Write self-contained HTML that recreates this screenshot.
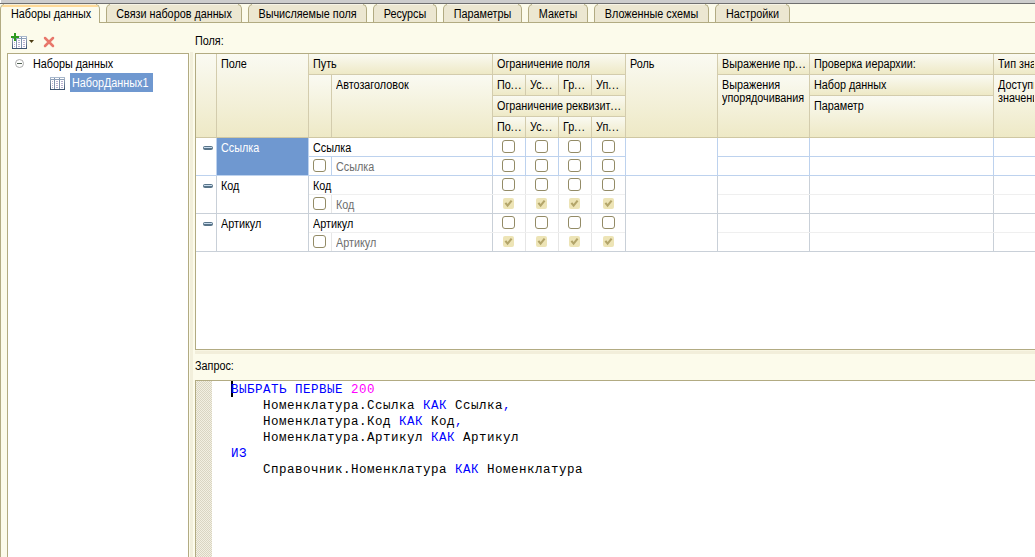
<!DOCTYPE html>
<html><head><meta charset="utf-8">
<style>
*{margin:0;padding:0;box-sizing:border-box}
html,body{width:1035px;height:557px;overflow:hidden;background:#FCFBEB;font-family:"Liberation Sans",sans-serif;font-size:11px;color:#000}
.a{position:absolute}
.t{position:absolute;white-space:pre;line-height:13px;font-size:12px;transform:scaleX(0.9);transform-origin:0 0}
.tab{position:absolute;top:4px;height:18px;background:#ECE7D1;border:1px solid #B2AB82;border-bottom:none;border-radius:5px 5px 0 0}
.tab span{position:absolute;top:3px;left:0;right:0;text-align:center;white-space:pre;line-height:13px;font-size:12px;transform:scaleX(0.9);transform-origin:50% 0}
.hd{position:absolute;background:linear-gradient(#FAFAF2,#EEE9C6)}
.cb{position:absolute;width:13px;height:13px;border:1px solid #938B66;border-radius:3px;background:#fff}
.cbd{position:absolute;width:11px;height:11px;border-radius:2px;background:#EDE4B6}
.mi{position:absolute;width:10px;height:4px;border-radius:2px;background:#587489}
.mi:after{content:"";position:absolute;left:1px;top:1px;width:8px;height:1px;background:#C9DCEE}
.code{position:absolute;font-family:"Liberation Mono",monospace;font-size:12.5px;letter-spacing:0.5px;line-height:16px;white-space:pre}
.kw{color:#0000FF}
.num{color:#FF00FF}
</style></head><body>

<div class="a" style="left:0px;top:0px;width:1035px;height:3px;background:#CDCDCD"></div>
<div class="a" style="left:0px;top:3px;width:1035px;height:1px;background:#6F6F6F"></div>
<div class="a" style="left:0px;top:0px;width:1px;height:3px;background:#FFFFFF"></div>
<div class="a" style="left:99px;top:22px;width:936px;height:1px;background:#B2AB82"></div>
<div class="a" style="left:0px;top:22px;width:1px;height:535px;background:#B2AB82"></div>
<div class="tab" style="left:0;width:100px;height:19px;background:#FCFBEB"><span style="left:2px;right:0">Наборы данных</span></div>
<div class="a" style="left:4px;top:4px;width:92px;height:1px;background:#F4EFDC"></div>
<div class="a" style="left:2px;top:5px;width:96px;height:2px;background:#FFDA98;border-radius:3px 3px 0 0"></div>
<div class="tab" style="left:106px;width:136px"><span>Связи наборов данных</span></div>
<div class="a" style="left:110px;top:4px;width:128px;height:1px;background:#F7F4E6"></div>
<div class="tab" style="left:248px;width:119px"><span>Вычисляемые поля</span></div>
<div class="a" style="left:252px;top:4px;width:111px;height:1px;background:#F7F4E6"></div>
<div class="tab" style="left:373px;width:64px"><span>Ресурсы</span></div>
<div class="a" style="left:377px;top:4px;width:56px;height:1px;background:#F7F4E6"></div>
<div class="tab" style="left:443px;width:79px"><span>Параметры</span></div>
<div class="a" style="left:447px;top:4px;width:71px;height:1px;background:#F7F4E6"></div>
<div class="tab" style="left:528px;width:60px"><span>Макеты</span></div>
<div class="a" style="left:532px;top:4px;width:52px;height:1px;background:#F7F4E6"></div>
<div class="tab" style="left:594px;width:115px"><span>Вложенные схемы</span></div>
<div class="a" style="left:598px;top:4px;width:107px;height:1px;background:#F7F4E6"></div>
<div class="tab" style="left:715px;width:75px"><span>Настройки</span></div>
<div class="a" style="left:719px;top:4px;width:67px;height:1px;background:#F7F4E6"></div>
<svg class="a" style="left:10px;top:32px" width="26" height="18" viewBox="0 0 26 18"><defs><linearGradient id="tg" x1="0" y1="0" x2="0" y2="1"><stop offset="0" stop-color="#A9B8CC"/><stop offset="1" stop-color="#3E5370"/></linearGradient></defs>
<rect x="2.5" y="4.5" width="14" height="12" fill="#fff" stroke="url(#tg)"/>
<line x1="6.5" y1="5" x2="6.5" y2="16" stroke="#7F93AE"/>
<line x1="11.5" y1="5" x2="11.5" y2="16" stroke="#7F93AE"/>
<line x1="3" y1="6.5" x2="16" y2="6.5" stroke="#8EA0B8"/>
<g fill="#B9B0D0"><rect x="4" y="8" width="1" height="1"/><rect x="8" y="8" width="2" height="1"/><rect x="13" y="8" width="2" height="1"/><rect x="4" y="10" width="1" height="1"/><rect x="8" y="10" width="2" height="1"/><rect x="13" y="10" width="2" height="1"/><rect x="4" y="12" width="1" height="1"/><rect x="8" y="12" width="2" height="1"/><rect x="13" y="12" width="2" height="1"/><rect x="4" y="14" width="1" height="1"/><rect x="8" y="14" width="2" height="1"/><rect x="13" y="14" width="2" height="1"/></g><rect x="1" y="4" width="8" height="2" fill="#2E9A1E"/><rect x="4" y="1" width="2" height="8" fill="#2E9A1E"/><path d="M19 8 L24 8 L21.5 11 Z" fill="#4B3C12"/></svg>
<svg class="a" style="left:42px;top:35px" width="14" height="14" viewBox="0 0 14 14"><path d="M3 3 L11 11 M11 3 L3 11" stroke="#E8776B" stroke-width="2.5" stroke-linecap="round"/></svg>
<div class="a" style="left:7px;top:53px;width:182px;height:504px;background:#fff;border:1px solid #B2AB82;border-bottom:none"></div>
<svg class="a" style="left:15px;top:59px" width="9" height="9" viewBox="0 0 9 9"><circle cx="4.5" cy="4.5" r="4" fill="#fff" stroke="#ABABAB"/><rect x="2" y="4" width="5" height="1" fill="#4F5F50"/></svg>
<div class="t" style="left:33px;top:58px;">Наборы данных</div>
<svg class="a" style="left:50px;top:77px" width="15" height="13" viewBox="0 0 15 13"><defs><linearGradient id="tg2" x1="0" y1="0" x2="0" y2="1"><stop offset="0" stop-color="#A9B8CC"/><stop offset="1" stop-color="#3E5370"/></linearGradient></defs>
<rect x="0.5" y="0.5" width="14" height="12" fill="#fff" stroke="url(#tg2)"/>
<line x1="4.5" y1="1" x2="4.5" y2="12" stroke="#7F93AE"/>
<line x1="9.5" y1="1" x2="9.5" y2="12" stroke="#7F93AE"/>
<line x1="1" y1="2.5" x2="14" y2="2.5" stroke="#8EA0B8"/>
<g fill="#B9B0D0"><rect x="2" y="4" width="1" height="1"/><rect x="6" y="4" width="2" height="1"/><rect x="11" y="4" width="2" height="1"/><rect x="2" y="6" width="1" height="1"/><rect x="6" y="6" width="2" height="1"/><rect x="11" y="6" width="2" height="1"/><rect x="2" y="8" width="1" height="1"/><rect x="6" y="8" width="2" height="1"/><rect x="11" y="8" width="2" height="1"/><rect x="2" y="10" width="1" height="1"/><rect x="6" y="10" width="2" height="1"/><rect x="11" y="10" width="2" height="1"/></g></svg>
<div class="a" style="left:70px;top:73px;width:83px;height:19px;background:#6F98D0"></div>
<div class="t" style="left:72px;top:77px;color:#fff">НаборДанных1</div>
<div class="a" style="left:190px;top:52px;width:3px;height:505px;background:#F2EFDB"></div>
<div class="t" style="left:195px;top:35px;">Поля:</div>
<div class="a" style="left:195px;top:53px;width:840px;height:297px;background:#fff;border:1px solid #B2AB82;border-right:none"></div>
<div class="a" style="left:196px;top:54px;width:839px;height:84px;background:#D3CCAD"></div>
<div class="a" style="left:196px;top:54px;width:20px;height:83px;background:linear-gradient(#FAFAF2,#EEE9C6)"></div>
<div class="a" style="left:217px;top:54px;width:91px;height:83px;background:linear-gradient(#FAFAF2,#EEE9C6)"></div>
<div class="a" style="left:309px;top:54px;width:183px;height:20px;background:linear-gradient(#FAFAF2,#EEE9C6)"></div>
<div class="a" style="left:309px;top:75px;width:22px;height:62px;background:linear-gradient(#FAFAF2,#EEE9C6)"></div>
<div class="a" style="left:332px;top:75px;width:160px;height:62px;background:linear-gradient(#FAFAF2,#EEE9C6)"></div>
<div class="a" style="left:493px;top:54px;width:132px;height:20px;background:linear-gradient(#FAFAF2,#EEE9C6)"></div>
<div class="a" style="left:493px;top:75px;width:32px;height:20px;background:linear-gradient(#FAFAF2,#EEE9C6)"></div>
<div class="a" style="left:526px;top:75px;width:32px;height:20px;background:linear-gradient(#FAFAF2,#EEE9C6)"></div>
<div class="a" style="left:559px;top:75px;width:32px;height:20px;background:linear-gradient(#FAFAF2,#EEE9C6)"></div>
<div class="a" style="left:592px;top:75px;width:33px;height:20px;background:linear-gradient(#FAFAF2,#EEE9C6)"></div>
<div class="a" style="left:493px;top:96px;width:132px;height:20px;background:linear-gradient(#FAFAF2,#EEE9C6)"></div>
<div class="a" style="left:493px;top:117px;width:32px;height:20px;background:linear-gradient(#FAFAF2,#EEE9C6)"></div>
<div class="a" style="left:526px;top:117px;width:32px;height:20px;background:linear-gradient(#FAFAF2,#EEE9C6)"></div>
<div class="a" style="left:559px;top:117px;width:32px;height:20px;background:linear-gradient(#FAFAF2,#EEE9C6)"></div>
<div class="a" style="left:592px;top:117px;width:33px;height:20px;background:linear-gradient(#FAFAF2,#EEE9C6)"></div>
<div class="a" style="left:626px;top:54px;width:91px;height:83px;background:linear-gradient(#FAFAF2,#EEE9C6)"></div>
<div class="a" style="left:718px;top:54px;width:91px;height:20px;background:linear-gradient(#FAFAF2,#EEE9C6)"></div>
<div class="a" style="left:718px;top:75px;width:91px;height:62px;background:linear-gradient(#FAFAF2,#EEE9C6)"></div>
<div class="a" style="left:810px;top:54px;width:183px;height:20px;background:linear-gradient(#FAFAF2,#EEE9C6)"></div>
<div class="a" style="left:810px;top:75px;width:183px;height:20px;background:linear-gradient(#FAFAF2,#EEE9C6)"></div>
<div class="a" style="left:810px;top:96px;width:183px;height:41px;background:linear-gradient(#FAFAF2,#EEE9C6)"></div>
<div class="a" style="left:994px;top:54px;width:41px;height:20px;background:linear-gradient(#FAFAF2,#EEE9C6)"></div>
<div class="a" style="left:994px;top:75px;width:41px;height:62px;background:linear-gradient(#FAFAF2,#EEE9C6)"></div>
<div class="t" style="left:221px;top:58px;width:95.6px;overflow:hidden">Поле</div>
<div class="t" style="left:313px;top:58px;width:197.8px;overflow:hidden">Путь</div>
<div class="t" style="left:336px;top:79px;width:172.2px;overflow:hidden">Автозаголовок</div>
<div class="t" style="left:497px;top:58px;width:141.1px;overflow:hidden">Ограничение поля</div>
<div class="t" style="left:497px;top:79px;width:30.0px;overflow:hidden">По<span style="letter-spacing:0.8px">...</span></div>
<div class="t" style="left:530px;top:79px;width:30.0px;overflow:hidden">Ус<span style="letter-spacing:0.8px">...</span></div>
<div class="t" style="left:563px;top:79px;width:30.0px;overflow:hidden">Гр<span style="letter-spacing:0.8px">...</span></div>
<div class="t" style="left:596px;top:79px;width:31.1px;overflow:hidden">Уп<span style="letter-spacing:0.8px">...</span></div>
<div class="t" style="left:497px;top:100px;width:141.1px;overflow:hidden">Ограничение реквизит<span style="letter-spacing:0.8px">...</span></div>
<div class="t" style="left:497px;top:121px;width:30.0px;overflow:hidden">По<span style="letter-spacing:0.8px">...</span></div>
<div class="t" style="left:530px;top:121px;width:30.0px;overflow:hidden">Ус<span style="letter-spacing:0.8px">...</span></div>
<div class="t" style="left:563px;top:121px;width:30.0px;overflow:hidden">Гр<span style="letter-spacing:0.8px">...</span></div>
<div class="t" style="left:596px;top:121px;width:31.1px;overflow:hidden">Уп<span style="letter-spacing:0.8px">...</span></div>
<div class="t" style="left:630px;top:58px;width:95.6px;overflow:hidden">Роль</div>
<div class="t" style="left:722px;top:58px;width:95.6px;overflow:hidden">Выражение пр<span style="letter-spacing:0.8px">...</span></div>
<div class="t" style="left:722px;top:79px;width:95.6px;overflow:hidden">Выражения
упорядочивания</div>
<div class="t" style="left:814px;top:58px;width:197.8px;overflow:hidden">Проверка иерархии:</div>
<div class="t" style="left:814px;top:79px;width:197.8px;overflow:hidden">Набор данных</div>
<div class="t" style="left:814px;top:100px;width:197.8px;overflow:hidden">Параметр</div>
<div class="t" style="left:998px;top:58px;width:40.0px;overflow:hidden">Тип значения</div>
<div class="t" style="left:998px;top:79px;width:40.0px;overflow:hidden">Доступные
значения</div>
<div class="a" style="left:196px;top:137px;width:839px;height:1px;background:#CFC7A3"></div>
<div class="a" style="left:216px;top:138px;width:1px;height:37px;background:#BDD2EE"></div>
<div class="a" style="left:308px;top:138px;width:1px;height:37px;background:#BDD2EE"></div>
<div class="a" style="left:492px;top:138px;width:1px;height:37px;background:#BDD2EE"></div>
<div class="a" style="left:625px;top:138px;width:1px;height:37px;background:#BDD2EE"></div>
<div class="a" style="left:717px;top:138px;width:1px;height:37px;background:#BDD2EE"></div>
<div class="a" style="left:809px;top:138px;width:1px;height:37px;background:#BDD2EE"></div>
<div class="a" style="left:993px;top:138px;width:1px;height:37px;background:#BDD2EE"></div>
<div class="a" style="left:331px;top:157px;width:1px;height:18px;background:#BDD2EE"></div>
<div class="a" style="left:525px;top:138px;width:1px;height:37px;background:#BDD2EE"></div>
<div class="a" style="left:558px;top:138px;width:1px;height:37px;background:#BDD2EE"></div>
<div class="a" style="left:591px;top:138px;width:1px;height:37px;background:#BDD2EE"></div>
<div class="a" style="left:309px;top:156px;width:316px;height:1px;background:#BDD2EE"></div>
<div class="a" style="left:718px;top:156px;width:317px;height:1px;background:#BDD2EE"></div>
<div class="a" style="left:196px;top:175px;width:839px;height:1px;background:#BDD2EE"></div>
<div class="a" style="left:217px;top:138px;width:91px;height:37px;background:#6F98D0"></div>
<div class="mi" style="left:203px;top:146px"></div>
<div class="t" style="left:221px;top:142px;color:#fff">Ссылка</div>
<div class="t" style="left:313px;top:142px;">Ссылка</div>
<div class="cb" style="left:313px;top:159px"></div>
<div class="t" style="left:336px;top:161px;color:#6E6E6E">Ссылка</div>
<div class="cb" style="left:502px;top:140px"></div>
<div class="cb" style="left:502px;top:159px"></div>
<div class="cb" style="left:535px;top:140px"></div>
<div class="cb" style="left:535px;top:159px"></div>
<div class="cb" style="left:568px;top:140px"></div>
<div class="cb" style="left:568px;top:159px"></div>
<div class="cb" style="left:602px;top:140px"></div>
<div class="cb" style="left:602px;top:159px"></div>
<div class="a" style="left:216px;top:176px;width:1px;height:37px;background:#C9D0D8"></div>
<div class="a" style="left:308px;top:176px;width:1px;height:37px;background:#C9D0D8"></div>
<div class="a" style="left:492px;top:176px;width:1px;height:37px;background:#C9D0D8"></div>
<div class="a" style="left:625px;top:176px;width:1px;height:37px;background:#C9D0D8"></div>
<div class="a" style="left:717px;top:176px;width:1px;height:37px;background:#C9D0D8"></div>
<div class="a" style="left:809px;top:176px;width:1px;height:37px;background:#C9D0D8"></div>
<div class="a" style="left:993px;top:176px;width:1px;height:37px;background:#C9D0D8"></div>
<div class="a" style="left:331px;top:195px;width:1px;height:18px;background:#E6E6E6"></div>
<div class="a" style="left:525px;top:176px;width:1px;height:37px;background:#E6E6E6"></div>
<div class="a" style="left:558px;top:176px;width:1px;height:37px;background:#E6E6E6"></div>
<div class="a" style="left:591px;top:176px;width:1px;height:37px;background:#E6E6E6"></div>
<div class="a" style="left:309px;top:194px;width:316px;height:1px;background:#EFEFEF"></div>
<div class="a" style="left:718px;top:194px;width:317px;height:1px;background:#EFEFEF"></div>
<div class="a" style="left:196px;top:213px;width:839px;height:1px;background:#C9D0D8"></div>
<div class="mi" style="left:203px;top:184px"></div>
<div class="t" style="left:221px;top:180px;">Код</div>
<div class="t" style="left:313px;top:180px;">Код</div>
<div class="cb" style="left:313px;top:197px"></div>
<div class="t" style="left:336px;top:199px;color:#6E6E6E">Код</div>
<div class="cb" style="left:502px;top:178px"></div>
<div class="cbd" style="left:503px;top:198px"><svg width="11" height="11" viewBox="0 0 11 11" style="position:absolute;left:0;top:0"><path d="M2.4 4.8 L4.6 7.6 L8.6 2.6" stroke="#B3A56A" stroke-width="2.1" fill="none"/></svg></div>
<div class="cb" style="left:535px;top:178px"></div>
<div class="cbd" style="left:536px;top:198px"><svg width="11" height="11" viewBox="0 0 11 11" style="position:absolute;left:0;top:0"><path d="M2.4 4.8 L4.6 7.6 L8.6 2.6" stroke="#B3A56A" stroke-width="2.1" fill="none"/></svg></div>
<div class="cb" style="left:568px;top:178px"></div>
<div class="cbd" style="left:569px;top:198px"><svg width="11" height="11" viewBox="0 0 11 11" style="position:absolute;left:0;top:0"><path d="M2.4 4.8 L4.6 7.6 L8.6 2.6" stroke="#B3A56A" stroke-width="2.1" fill="none"/></svg></div>
<div class="cb" style="left:602px;top:178px"></div>
<div class="cbd" style="left:603px;top:198px"><svg width="11" height="11" viewBox="0 0 11 11" style="position:absolute;left:0;top:0"><path d="M2.4 4.8 L4.6 7.6 L8.6 2.6" stroke="#B3A56A" stroke-width="2.1" fill="none"/></svg></div>
<div class="a" style="left:216px;top:214px;width:1px;height:37px;background:#C9D0D8"></div>
<div class="a" style="left:308px;top:214px;width:1px;height:37px;background:#C9D0D8"></div>
<div class="a" style="left:492px;top:214px;width:1px;height:37px;background:#C9D0D8"></div>
<div class="a" style="left:625px;top:214px;width:1px;height:37px;background:#C9D0D8"></div>
<div class="a" style="left:717px;top:214px;width:1px;height:37px;background:#C9D0D8"></div>
<div class="a" style="left:809px;top:214px;width:1px;height:37px;background:#C9D0D8"></div>
<div class="a" style="left:993px;top:214px;width:1px;height:37px;background:#C9D0D8"></div>
<div class="a" style="left:331px;top:233px;width:1px;height:18px;background:#E6E6E6"></div>
<div class="a" style="left:525px;top:214px;width:1px;height:37px;background:#E6E6E6"></div>
<div class="a" style="left:558px;top:214px;width:1px;height:37px;background:#E6E6E6"></div>
<div class="a" style="left:591px;top:214px;width:1px;height:37px;background:#E6E6E6"></div>
<div class="a" style="left:309px;top:232px;width:316px;height:1px;background:#EFEFEF"></div>
<div class="a" style="left:718px;top:232px;width:317px;height:1px;background:#EFEFEF"></div>
<div class="a" style="left:196px;top:251px;width:839px;height:1px;background:#C9D0D8"></div>
<div class="mi" style="left:203px;top:222px"></div>
<div class="t" style="left:221px;top:218px;">Артикул</div>
<div class="t" style="left:313px;top:218px;">Артикул</div>
<div class="cb" style="left:313px;top:235px"></div>
<div class="t" style="left:336px;top:237px;color:#6E6E6E">Артикул</div>
<div class="cb" style="left:502px;top:216px"></div>
<div class="cbd" style="left:503px;top:236px"><svg width="11" height="11" viewBox="0 0 11 11" style="position:absolute;left:0;top:0"><path d="M2.4 4.8 L4.6 7.6 L8.6 2.6" stroke="#B3A56A" stroke-width="2.1" fill="none"/></svg></div>
<div class="cb" style="left:535px;top:216px"></div>
<div class="cbd" style="left:536px;top:236px"><svg width="11" height="11" viewBox="0 0 11 11" style="position:absolute;left:0;top:0"><path d="M2.4 4.8 L4.6 7.6 L8.6 2.6" stroke="#B3A56A" stroke-width="2.1" fill="none"/></svg></div>
<div class="cb" style="left:568px;top:216px"></div>
<div class="cbd" style="left:569px;top:236px"><svg width="11" height="11" viewBox="0 0 11 11" style="position:absolute;left:0;top:0"><path d="M2.4 4.8 L4.6 7.6 L8.6 2.6" stroke="#B3A56A" stroke-width="2.1" fill="none"/></svg></div>
<div class="cb" style="left:602px;top:216px"></div>
<div class="cbd" style="left:603px;top:236px"><svg width="11" height="11" viewBox="0 0 11 11" style="position:absolute;left:0;top:0"><path d="M2.4 4.8 L4.6 7.6 L8.6 2.6" stroke="#B3A56A" stroke-width="2.1" fill="none"/></svg></div>
<div class="a" style="left:195px;top:350px;width:840px;height:1px;background:#F8F5E2"></div>
<div class="a" style="left:195px;top:351px;width:840px;height:3px;background:#F2EEDA"></div>
<div class="t" style="left:195px;top:360px;">Запрос:</div>
<div class="a" style="left:195px;top:380px;width:840px;height:177px;background:#fff;border:1px solid #B2AB82;border-right:none;border-bottom:none"></div>
<div class="a" style="left:196px;top:381px;width:16px;height:176px;background-color:#F3F0E2;background-image:linear-gradient(45deg,#D9D5C2 25%,transparent 25%,transparent 75%,#D9D5C2 75%),linear-gradient(45deg,#D9D5C2 25%,transparent 25%,transparent 75%,#D9D5C2 75%);background-size:2px 2px;background-position:0 0,1px 1px"></div>
<div class="a" style="left:231px;top:381px;width:2px;height:16px;background:#000"></div>
<div class="code" style="left:231px;top:382px"><span class="kw">ВЫБРАТЬ ПЕРВЫЕ</span> <span class="num">200</span>
    Номенклатура.Ссылка <span class="kw">КАК</span> Ссылка<span class="kw">,</span>
    Номенклатура.Код <span class="kw">КАК</span> Код<span class="kw">,</span>
    Номенклатура.Артикул <span class="kw">КАК</span> Артикул
<span class="kw">ИЗ</span>
    Справочник.Номенклатура <span class="kw">КАК</span> Номенклатура</div>
</body></html>
